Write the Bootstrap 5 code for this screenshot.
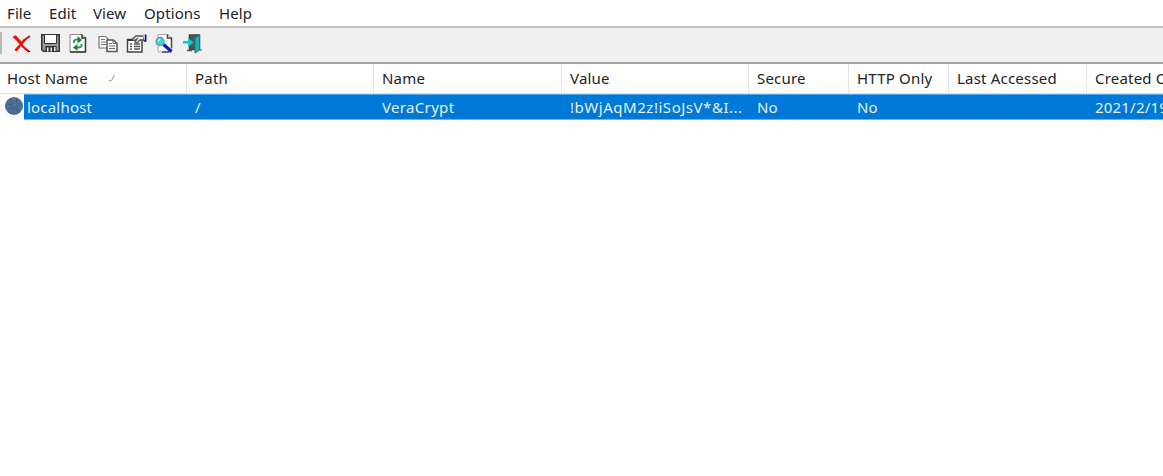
<!DOCTYPE html>
<html lang="en">
<head>
<meta charset="utf-8">
<meta name="viewport" content="width=device-width, initial-scale=1">
<title>Cookies</title>
<link href="https://cdn.jsdelivr.net/npm/bootstrap@5.3.0/dist/css/bootstrap.min.css" rel="stylesheet">
<style>
body{font-family:"Noto Sans","Noto Sans CJK SC",sans-serif;font-size:15px;line-height:20px;color:#222;height:476px}
.menubar{height:26px;padding-left:7px}
.menubar .nav-link{color:#222;padding:3px 0 0;white-space:nowrap;letter-spacing:.1px}
.toolbar{height:38px;background:#f0f0f0;border-top:2px solid #c4c4c4;border-bottom:2px solid #a3a3a3}
.grip{width:2px;height:22px;background:#b9b9b9;margin-top:4px}
.tools{padding:5px 0 0 9px}
.tool{border:0;padding:0;background:none;width:22px;height:22px;line-height:0;margin-right:6.7px}
.grid-view{width:100%}
.cookies{table-layout:fixed;width:1274px;margin:0;border-collapse:separate;border-spacing:0}
.cookies th,.cookies td{padding:0 0 0 8px;font-weight:400;white-space:nowrap;line-height:20px;overflow:hidden;vertical-align:middle;letter-spacing:.2px}
.cookies th{height:30px;color:#222;border-right:1px solid #e3e3e3;padding-bottom:2px}
.cookies th:first-child{padding-left:7px}
.cookies td{height:26px;background:#0078d7;color:#e5f1fb;border-top:1px solid #4ca5e8;border-bottom:1px solid #6bb5ee}
.cookies td:first-child{background:#fff;border:0;padding:0}
.cookies td.cookie-value{letter-spacing:.53px}
.cookies td.cookie-name{letter-spacing:.33px}
.host-label{width:102px}
.host{height:26px;background:#0078d7;border-top:1px solid #4ca5e8;border-bottom:1px solid #6bb5ee;padding:2px 0 0 3px}
</style>
</head>
<body class="bg-white overflow-hidden">
<nav class="menubar nav flex-nowrap">
<a class="nav-link" style="width:42px" href="#">File</a>
<a class="nav-link" style="width:44px" href="#">Edit</a>
<a class="nav-link" style="width:51px" href="#">View</a>
<a class="nav-link" style="width:75px" href="#">Options</a>
<a class="nav-link" href="#">Help</a>
</nav>
<div class="toolbar d-flex" role="toolbar">
<div class="grip"></div>
<div class="tools d-flex">
<button class="tool" aria-label="Delete"><svg width="22" height="22" fill="none"><path d="M2.500 3.500l4 3.500 4.500 5.500 4 4 3 2" stroke="#d01414" stroke-width="2.200"/><path d="M19 3l-5.500 4-4 5-5 5.500" stroke="#d01414" stroke-width="2"/><path d="M3.500 3l6 6.500M14 6.500L10 11M4.500 17.500l3.500-4" stroke="#ff0808" stroke-width="2.600"/><path d="M17 18.500h2" stroke="#600"/></svg></button>
<button class="tool" aria-label="Save"><svg width="22" height="22"><path d="M1 1h19v18H3l-2-2z" fill="#333"/><path d="M2.500 2.500h16v15h-15l-1-1z" fill="#9a9a9a"/><path d="M4.500 1.500h12v9h-12z" fill="#fff" stroke="#333"/><path d="M5.500 13h11v6h-11z" fill="#333"/><path d="M7 14.500h1.500v4H7zM10.500 14.500H12v4h-1.500zM14 14h1.500v4H14z" fill="#eee"/></svg></button>
<button class="tool" aria-label="Refresh"><svg width="22" height="22" fill="none"><path d="M2 1.500h12l3.500 3.500v14H2z" fill="#fff" stroke="#888"/><path d="M14 1.500V5h3.500v14H2" stroke="#333" stroke-width="1.500"/><path d="M6 10V8q1-2 5-1.500M13.500 11v2q-1 2-5 1.500" stroke="#239c60" stroke-width="1.900"/><path d="M9.500 3l4.500 4-4.500 3.500zM9.500 11L5 14.500 9.500 18z" fill="#188030"/></svg></button>
<button class="tool" aria-label="Copy"><svg width="22" height="22" fill="none"><path d="M2 3.500h6.500l3 3v8.500H2z" fill="#fff" stroke="#777" stroke-width="1.200"/><path d="M4 6.500h4M4 9h5M4 11.500h5" stroke="#777"/><path d="M10 7h6.500l3.500 3.500v8h-10z" fill="#fff" stroke="#555" stroke-width="1.500"/><path d="M16 7v3.500h4M12 10.500h3M12 13h6M12 15.500h6" stroke="#666"/></svg></button>
<button class="tool" aria-label="Properties"><svg width="22" height="22" fill="none"><path d="M1.500 6.500h14.500v12.500H1.500z" fill="#fff" stroke="#444" stroke-width="1.500"/><path d="M1.500 7h11" stroke="#333" stroke-width="2"/><path d="M4 11h2M8 11h6M4 13.500h2M8 13.500h6M4 16h2M8 16h6" stroke="#555" stroke-width="1.400"/><path d="M6 6.500L10 3h8v4h-4l-3 3-2-1 2-3-3 1.500z" fill="#eee" stroke="#555" stroke-width="1.300"/><path d="M17 2h2v6" fill="#eee" stroke="#aaa"/><path d="M19.700 1.500v6.500h-2" stroke="#10108a" stroke-width="1.500"/></svg></button>
<button class="tool" aria-label="Find"><svg width="22" height="22" fill="none"><path d="M4 1.500h10l3.500 3.500v14H4z" fill="#fff" stroke="#aaa"/><path d="M13.500 1.500V5h4v10M8 19h7" stroke="#444" stroke-width="1.500"/><circle cx="6" cy="8.500" r="4" fill="#35dadc" stroke="#62999f" stroke-width="1.300"/><path d="M4 8l2-2" stroke="#d8ffff" stroke-width="1.500"/><path d="M9.500 11.500l8 7" stroke="#0b1bc4" stroke-width="3.200"/></svg></button>
<button class="tool" aria-label="Exit"><svg width="22" height="22" viewBox="0 0 22 22" fill="none"><path d="M6.500 2h10v14.500h-10z" fill="#555" stroke="#444" stroke-width="1.500"/><path d="M4 17.500h5" stroke="#555" stroke-width="1.500"/><path d="M12 5l4.500-3v15L12 20z" fill="#10b7b9" stroke="#257579"/><path d="M17 17h2" stroke="#444"/><path d="M-.500 8H5V4.500L10.500 9.500 5 14v-3.500H-.500z" fill="#0ccbcf"/></svg></button>
</div>
</div>
<div class="grid-view overflow-hidden">
<table class="table cookies">
<colgroup><col style="width:187px"><col style="width:187px"><col style="width:188px"><col style="width:187px"><col style="width:100px"><col style="width:100px"><col style="width:138px"><col style="width:187px"></colgroup>
<thead><tr><th><div class="d-flex align-items-center"><span class="host-label">Host Name</span><svg width="9" height="9" fill="none"><path d="M0 7.500h2.500L5.500 2" stroke="#999"/></svg></div></th><th>Path</th><th>Name</th><th>Value</th><th>Secure</th><th>HTTP Only</th><th>Last Accessed</th><th>Created On</th></tr></thead>
<tbody><tr><td><div class="d-flex"><svg width="24" height="26" class="flex-shrink-0"><circle cx="14" cy="12" r="9" fill="#496b94"/><path d="M8 7l2 1m3-3l2 2m3 0l2 2M7 12l3 1m3-3l3 1m2 3l3-1M10 17l2-2m2 4l3-2" stroke="#637998" stroke-width="1.300"/><path d="M10 5l1 2m5-2l1 3M8 10l3 1m5 3l2 3m-7-3l2 1" stroke="#3c5d86" stroke-width="1.300"/></svg><div class="host flex-grow-1">localhost</div></div></td><td>/</td><td class="cookie-name">VeraCrypt</td><td class="cookie-value">!bWjAqM2z!iSoJsV*&amp;I...</td><td>No</td><td>No</td><td></td><td>2021/2/19</td></tr></tbody>
</table>
</div>
<script src="https://cdn.jsdelivr.net/npm/bootstrap@5.3.0/dist/js/bootstrap.bundle.min.js"></script>
</body>
</html>
